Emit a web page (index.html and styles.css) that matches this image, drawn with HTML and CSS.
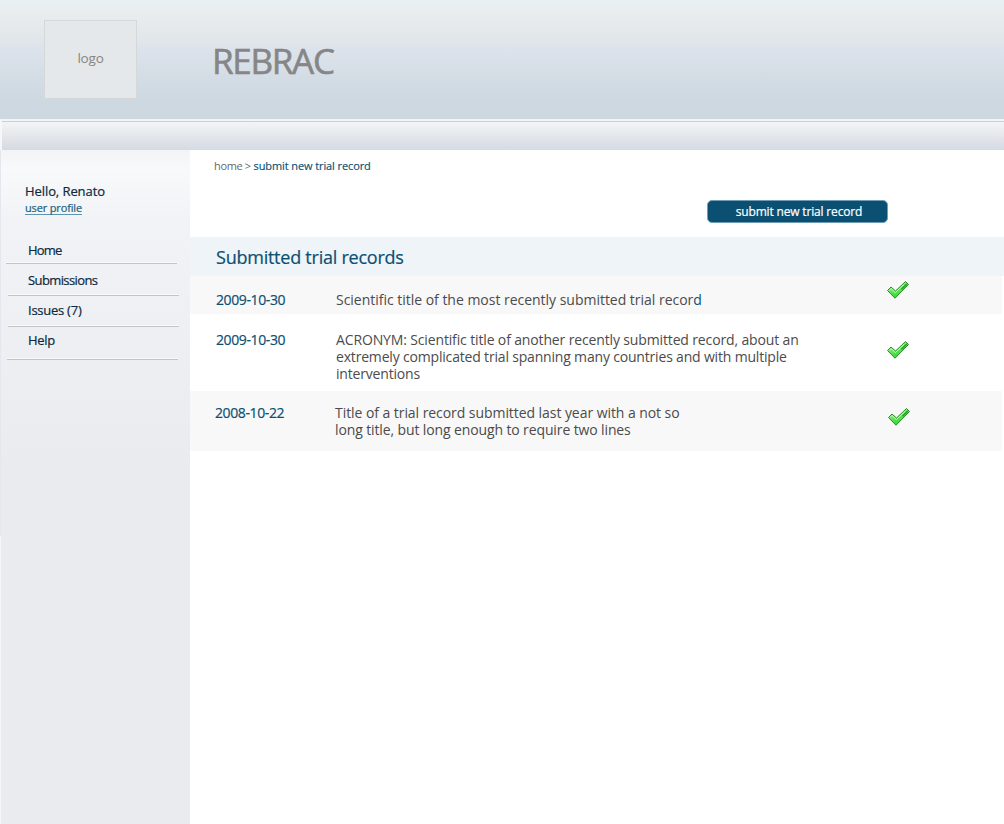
FILE: index.html
```html
<!DOCTYPE html>
<html lang="en">
<head>
<meta charset="utf-8">
<title>REBRAC</title>
<link rel="stylesheet" href="styles.css">
</head>
<body>
<svg class="defs" aria-hidden="true">
  <defs>
    <linearGradient id="green" x1="0" y1="0" x2="0.5" y2="1">
      <stop offset="0" stop-color="#b5ebb0"/>
      <stop offset="0.45" stop-color="#6eea66"/>
      <stop offset="1" stop-color="#2bd428"/>
    </linearGradient>
    <symbol id="check" viewBox="0 0 24 20">
      <path d="M1.5 10.5 5 7 9.5 11 19.5 1.5 22.5 4.5 9 18.2Z" fill="url(#green)" stroke="#2d8a2c" stroke-width="1" stroke-linejoin="round"/>
      <path d="M15 8.5 20.3 3.5 21.5 4.6 16 10Z" fill="#1dab1b"/>
      <path d="M3.2 10.4 5 8.5 9.4 12.6 18 4.4" fill="none" stroke="#d2f4cf" stroke-width="1"/>
    </symbol>
  </defs>
</svg>
<header class="header">
  <div class="logo">logo</div>
  <h1 class="brand">REBRAC</h1>
</header>
<div class="toolbar"></div>
<div class="page">
  <aside class="sidebar">
    <p class="hello">Hello, Renato</p>
    <a class="profile" href="#">user profile</a>
    <nav class="menu">
      <a class="item item-home" href="#">Home</a>
      <a class="item item-submissions" href="#">Submissions</a>
      <a class="item item-issues" href="#">Issues (7)</a>
      <a class="item item-help" href="#">Help</a>
    </nav>
  </aside>
  <main class="main">
    <div class="crumbs"><span class="crumb-home">home &gt;</span><a class="crumb-here" href="#">submit new trial record</a></div>
    <div class="actions"><button class="submit">submit new trial record</button></div>
    <h2 class="heading">Submitted trial records</h2>
    <div class="record record-first">
      <span class="date">2009-10-30</span>
      <p class="title">Scientific title of the most recently submitted trial recor<span class="accent">d</span></p>
      <svg class="check"><use href="#check"/></svg>
    </div>
    <div class="record record-second">
      <span class="date">2009-10-30</span>
      <p class="title">ACRONYM: Scientific title of another recently submitted record, about an<br><span class="tight">extremely complicated trial spanning many countries and with multiple<br>interventions</span></p>
      <svg class="check"><use href="#check"/></svg>
    </div>
    <div class="record record-third">
      <span class="date">2008-10-22</span>
      <p class="title">Title of a trial record submitted last year with a not so<br><span class="closing">long title, but long enough to require two lines</span></p>
      <svg class="check"><use href="#check"/></svg>
    </div>
  </main>
</div>
</body>
</html>
```
FILE: styles.css
```css
* { box-sizing: border-box; }
body {
  margin: 0;
  width: 1004px;
  height: 824px;
  overflow: hidden;
  background: #fff;
  font-family: "Trebuchet MS", "Open Sans", "Noto Sans", sans-serif;
  white-space: nowrap;
}
h1, h2, p { margin: 0; font-weight: 400; }
a { color: inherit; text-decoration: none; }
.defs { display: block; width: 0; height: 0; }

.header {
  display: flex;
  height: 119px;
  padding: 20px 0 0 44px;
  background: linear-gradient(#e9f0f3 0, #e9edf0 12px, #e1e6e9 40px, #dde3ec 48px, #d7dfe7 66px, #cdd8e0 100px, #ccd7df 119px);
}
.logo {
  width: 93px;
  height: 79px;
  border: 1px solid #d5d8d8;
  background: #e4e8ea;
  color: #858585;
  font-size: 13.5px;
  letter-spacing: -0.2px;
  line-height: 75px;
  text-align: center;
}
.brand {
  margin-left: 75px;
  color: #868686;
  font-size: 35px;
  letter-spacing: -1.3px;
  line-height: 82px;
  -webkit-text-stroke: 0.6px #868686;
}
.toolbar {
  height: 31px;
  border-left: 2px solid #f5f7f9;
  background: linear-gradient(#f2f5f7 0 2px, #c8d0d5 2px 3px, #f3f4f7 3px, #e0e4e8 20px, #d5dae4 31px);
}
.page { display: flex; height: 674px; }

.sidebar {
  width: 190px;
  border-left: 1px solid #e6ebf0;
  border-image: linear-gradient(#e3e8ef 386px, #f5f7fa 386px) 1;
  border-width: 0 0 0 1px;
  padding: 32px 0 0 5px;
  background: linear-gradient(#f3f4f5 0, #f8f9fa 18px, #f1f3f6 70px, #eff0f4 160px, #eaebef 320px, #e9ebef 100%);
  color: #0b2a40;
  -webkit-text-stroke: 0.2px currentColor;
}
.hello { margin-left: 19px; font-size: 13px; letter-spacing: -0.08px; line-height: 18px; }
.profile {
  display: block;
  width: 57px;
  height: 14px;
  margin: 1px 0 0 19px;
  border-bottom: 1px solid #5c93ad;
  color: #1b5f80;
  font-size: 11px;
  letter-spacing: -0.15px;
  line-height: 13px;
}
.menu { margin-top: 28px; font-size: 13px; }
.item {
  display: block;
  width: 171px;
  border-bottom: 1px solid #c2c4c6;
  box-shadow: inset 0 -1px #f9fafb;
  line-height: 14px;
}
.item-home { height: 21px; padding-left: 22px; letter-spacing: -0.8px; }
.item-submissions { height: 32px; margin-left: 2px; padding: 9px 0 0 20px; letter-spacing: -0.6px; }
.item-issues { height: 31px; margin-left: 2px; padding: 7px 0 0 20px; letter-spacing: -0.25px; }
.item-help { height: 33px; margin-left: 1px; padding: 6px 0 0 21px; letter-spacing: -0.3px; }

.main { flex: 1; }
.crumbs {
  display: flex;
  height: 50px;
  padding: 8px 0 0 24px;
  font-size: 11px;
  line-height: 15px;
}
.crumb-home { width: 39.5px; color: #686868; letter-spacing: -0.35px; }
.crumb-here { color: #0b5072; letter-spacing: -0.1px; -webkit-text-stroke: 0.15px #0b5072; }
.actions { height: 37px; padding-left: 517px; }
.submit {
  display: block;
  width: 181px;
  height: 23px;
  padding: 0 0 0 3px;
  border: 1px solid #6f9db3;
  border-radius: 5px;
  background: #0b5072;
  color: #fff;
  font-family: inherit;
  font-size: 12px;
  letter-spacing: -0.17px;
  line-height: 20px;
  -webkit-text-stroke: 0.2px #fff;
}
.heading {
  height: 39px;
  padding-left: 26px;
  background: #eff4f8;
  color: #0b5072;
  font-size: 18px;
  letter-spacing: -0.24px;
  line-height: 41px;
  -webkit-text-stroke: 0.2px #0b5072;
}
.record {
  display: flex;
  width: 812px;
  padding-left: 26px;
  color: #4b4b4b;
  font-size: 14px;
  line-height: 17px;
}
.date { width: 120px; color: #0b5072; letter-spacing: -0.38px; -webkit-text-stroke: 0.2px #0b5072; }
.title { width: 550px; }
.accent { color: #0b5072; }
.check { width: 24px; height: 20px; }
.record-first { height: 38px; padding-top: 15px; background: #f8f8f8; }
.record-second { height: 77px; padding-top: 17px; }
.record-third { height: 60px; padding: 13px 0 0 25px; background: #f8f8f8; }
.record-first .title { letter-spacing: -0.02px; }
.record-second .title { letter-spacing: -0.14px; }
.record-third .title { letter-spacing: -0.06px; }
.title .tight { letter-spacing: -0.18px; }
.title .closing { letter-spacing: -0.12px; }
.record-first .check { margin-top: -11px; }
.record-second .check { margin-top: 9px; }
.record-third .check { margin: 3px 0 0 2px; }
```
